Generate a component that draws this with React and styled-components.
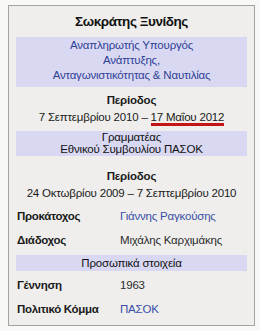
import styled, { createGlobalStyle } from 'styled-components';

const GlobalStyle = createGlobalStyle`
  body {
    margin: 0;
    background: #f8f8f7;
    font-family: 'Liberation Sans', Arial, sans-serif;
  }
`;

const Infobox = () => {
  return (
    <Page>
      <GlobalStyle />
      <Box>
        <Title>Σωκράτης Ξυνίδης</Title>
        <Band $lineHeight={15} $pad="1px 0 4px">
          <a>Αναπληρωτής Υπουργός</a>
          <a>Ανάπτυξης,</a>
          <a>Ανταγωνιστικότητας &amp; Ναυτιλίας</a>
        </Band>
        <Term $top={5} $bottom={5}>
          <b>Περίοδος</b>
          <span>
            7 Σεπτεμβρίου 2010 – <Marked>17 Μαΐου 2012</Marked>
          </span>
        </Term>
        <Band $lineHeight={12} $pad="0 0 1px" $plain>
          <span>Γραμματέας</span>
          <span>Εθνικού Συμβουλίου ΠΑΣΟΚ</span>
        </Band>
        <Term $top={12} $bottom={0}>
          <b>Περίοδος</b>
          <span>24 Οκτωβρίου 2009 – 7 Σεπτεμβρίου 2010</span>
        </Term>
        <Rows>
          <Label>Προκάτοχος</Label>
          <Value $link>Γιάννης Ραγκούσης</Value>
          <Label>Διάδοχος</Label>
          <Value>Μιχάλης Καρχιμάκης</Value>
        </Rows>
        <Band $lineHeight={16} $pad="0" $plain>
          <span>Προσωπικά στοιχεία</span>
        </Band>
        <Rows>
          <Label>Γέννηση</Label>
          <Value>1963</Value>
          <Label>Πολιτικό Κόμμα</Label>
          <Value $link>ΠΑΣΟΚ</Value>
        </Rows>
      </Box>
    </Page>
  );
};

export default Infobox;

const Page = styled.div`
  width: 260px;
  height: 331px;
  padding: 5px 0 0 8px;
  box-sizing: border-box;
`;

const Box = styled.div`
  width: 247px;
  height: 321px;
  box-sizing: border-box;
  border: 1px solid #a3a3a3;
  background: #efeeec;
  padding: 7px 7px 0;
  font-size: 11.5px;
  letter-spacing: -0.2px;
  color: #1a1a1a;
  display: flex;
  flex-direction: column;
`;

const Title = styled.div`
  font-size: 13.5px;
  font-weight: bold;
  letter-spacing: -0.45px;
  text-align: center;
  line-height: 18px;
  margin-bottom: 6px;
  color: #111;
`;

const Band = styled.div`
  background: #d9d8f3;
  display: flex;
  flex-direction: column;
  align-items: center;
  padding: ${({ $pad }) => $pad};
  line-height: ${({ $lineHeight }) => $lineHeight}px;
  color: ${({ $plain }) => ($plain ? '#111' : '#2f3f93')};

  a {
    color: inherit;
    text-decoration: none;
  }
`;

const Term = styled.div`
  display: flex;
  flex-direction: column;
  align-items: center;
  padding: ${({ $top, $bottom }) => `${$top}px 0 ${$bottom}px`};
  line-height: 17px;

  b {
    font-weight: bold;
  }
`;

const Marked = styled.span`
  border-bottom: 3px solid #c41414;
`;

const Rows = styled.div`
  display: grid;
  grid-template-columns: 104px 1fr;
  grid-auto-rows: 24px;
  align-items: center;
  padding: 2px 0 3px;
`;

const Label = styled.div`
  font-weight: bold;
  letter-spacing: -0.3px;
  padding-left: 1px;
`;

const Value = styled.div`
  color: ${({ $link }) => ($link ? '#3a4fa6' : '#2c2c2c')};
`;
